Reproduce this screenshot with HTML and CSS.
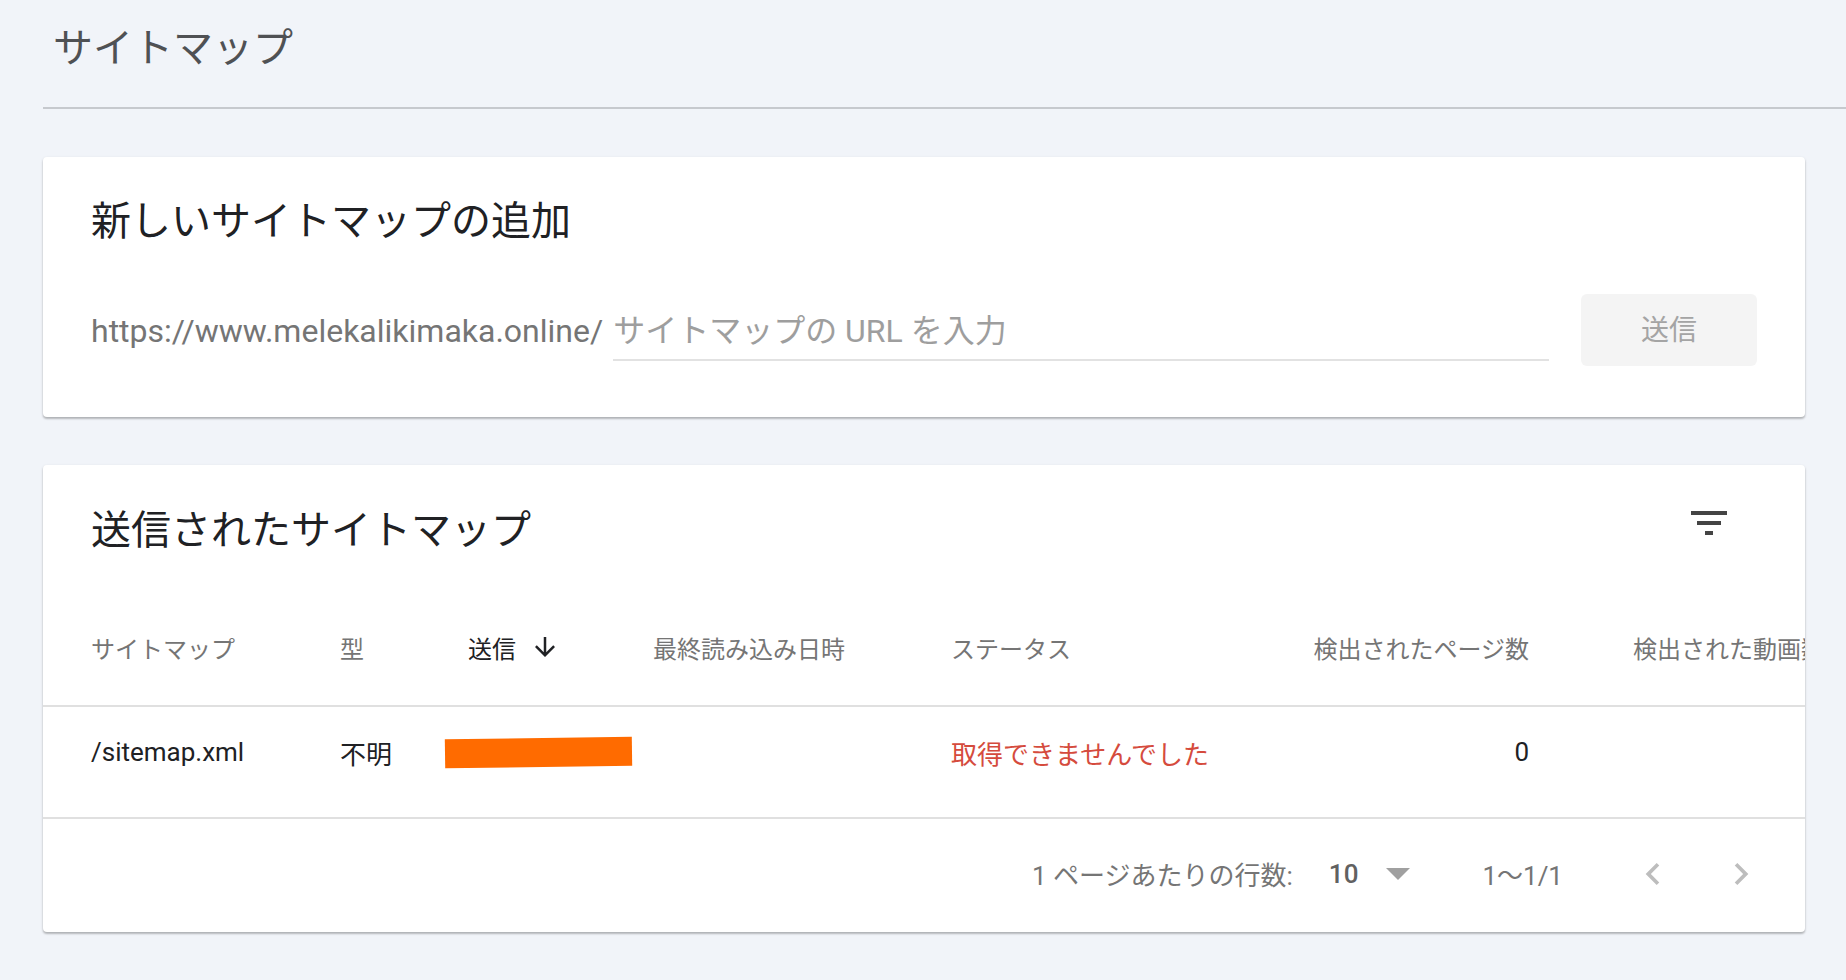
FILE: index.html
```html
<!DOCTYPE html>
<html lang="ja">
<head>
    <meta charset="UTF-8">
    <meta name="viewport" content="width=device-width, initial-scale=1.0">
    <title>サイトマップ</title>
    <link rel="stylesheet" href="styles.css">
</head>
<body>
    <header class="page-header">
        <h1 class="page-title">サイトマップ</h1>
    </header>

    <main class="content">
        <section class="card add-card">
            <h2 class="card-title">新しいサイトマップの追加</h2>
            <form class="add-form" onsubmit="return false">
                <span class="url-prefix">https://www.melekalikimaka.online/</span>
                <input class="url-input" type="text" placeholder="サイトマップの URL を入力">
                <button class="submit-btn" type="submit" disabled>送信</button>
            </form>
        </section>

        <section class="card list-card">
            <div class="card-head">
                <h2 class="card-title">送信されたサイトマップ</h2>
                <button class="icon-btn filter-btn" type="button" title="フィルタ">
                    <svg viewBox="0 0 24 24" width="48" height="48"><path d="M10 18h4v-2h-4v2zM3 6v2h18V6H3zm3 7h12v-2H6v2z"/></svg>
                </button>
            </div>

            <div class="table">
                <div class="tr th">
                    <div>サイトマップ</div>
                    <div>型</div>
                    <div class="sorted">送信
                        <svg viewBox="0 0 24 24" width="30" height="30"><path d="M20 12l-1.41-1.41L13 16.17V4h-2v12.17l-5.58-5.59L4 12l8 8 8-8z"/></svg>
                    </div>
                    <div>最終読み込み日時</div>
                    <div>ステータス</div>
                    <div class="num">検出されたページ数</div>
                    <div class="last">検出された動画数</div>
                </div>
                <div class="tr td">
                    <div>/sitemap.xml</div>
                    <div>不明</div>
                    <div><span class="redact"></span></div>
                    <div></div>
                    <div class="status-error">取得できませんでした</div>
                    <div class="num">0</div>
                    <div class="last"></div>
                </div>
            </div>

            <div class="pager">
                <span>1 ページあたりの行数:</span>
                <span class="rows-select">
                    <span class="rows-value">10</span>
                    <svg viewBox="0 0 24 12" width="24" height="12"><path d="M0 0h24L12 12z"/></svg>
                </span>
                <span class="range">1〜1/1</span>
                <button class="icon-btn page-btn prev" type="button" disabled>
                    <svg viewBox="0 0 24 24" width="44" height="44"><path d="M15.41 7.41L14 6l-6 6 6 6 1.41-1.41L10.83 12z"/></svg>
                </button>
                <button class="icon-btn page-btn next" type="button" disabled>
                    <svg viewBox="0 0 24 24" width="44" height="44"><path d="M10 6L8.59 7.41 13.17 12l-4.58 4.59L10 18l6-6z"/></svg>
                </button>
            </div>
        </section>
    </main>
</body>
</html>
```

FILE: styles.css
```css
body {
    margin: 0;
    background-color: #f1f4f9;
    font-family: Roboto, "Noto Sans CJK JP", sans-serif;
    color: #202124;
}
.page-header {
    box-sizing: border-box;
    height: 109px;
    margin-left: 43px;
    padding: 25px 0 0 10px;
    border-bottom: 2px solid #c6c9ce;
}
.page-title {
    margin: 0;
    font-size: 40px;
    line-height: 48px;
    font-weight: 400;
    color: #4f5154;
}
.content {
    padding: 48px 41px 48px 43px;
}
.card {
    background: white;
    border-radius: 4px;
    box-shadow: 0 1px 3px rgba(0,0,0,0.12), 0 2px 2px rgba(0,0,0,0.2);
    margin-bottom: 48px;
}
.card-title {
    margin: 0;
    font-size: 40px;
    line-height: 48px;
    font-weight: 400;
    color: #202124;
}
.add-card {
    padding: 41px 48px 51px;
}
.add-form {
    display: flex;
    align-items: flex-end;
    height: 72px;
    margin-top: 48px;
}
.url-prefix {
    font-size: 32px;
    line-height: 36px;
    color: #757575;
    margin: 0 10px 17px 0;
    white-space: nowrap;
}
.url-input {
    flex: 1;
    box-sizing: border-box;
    height: 48px;
    margin-bottom: 5px;
    padding: 0 0 10px;
    border: none;
    border-bottom: 2px solid #e2e2e2;
    background: transparent;
    outline: none;
    font-family: Roboto, "Noto Sans CJK JP", sans-serif;
    font-size: 32px;
    color: #202124;
}
.url-input::placeholder {
    color: #9e9e9e;
}
.submit-btn {
    align-self: center;
    width: 176px;
    height: 72px;
    margin-left: 32px;
    padding: 0 0 4px;
    border: none;
    border-radius: 6px;
    background-color: #f4f4f4;
    color: #a4a4a4;
    font-family: Roboto, "Noto Sans CJK JP", sans-serif;
    font-size: 28px;
}
.list-card {
    overflow: hidden;
}
.card-head {
    display: flex;
    justify-content: space-between;
    height: 124px;
    padding: 0 72px 0 48px;
}
.card-head .card-title {
    margin-top: 42px;
}
.filter-btn {
    margin-top: 34px;
}
.icon-btn {
    display: flex;
    align-items: center;
    justify-content: center;
    height: fit-content;
    padding: 0;
    border: none;
    background: none;
}
.filter-btn svg {
    fill: #444;
}
.tr {
    display: grid;
    grid-template-columns: 249px 128px 185px 298px 250px 328px max-content;
    align-items: center;
    box-sizing: border-box;
    padding-left: 48px;
    border-bottom: 2px solid #e0e0e0;
    white-space: nowrap;
}
.th {
    height: 118px;
    font-size: 24px;
    color: #757575;
}
.td {
    height: 112px;
    padding-bottom: 20px;
    font-size: 26px;
    color: #202124;
}
.num {
    text-align: right;
}
.last {
    padding-left: 104px;
}
.sorted {
    display: flex;
    align-items: center;
    color: #202124;
}
.sorted svg {
    margin-left: 14px;
    fill: #202124;
}
.redact {
    display: block;
    width: 187px;
    height: 29px;
    margin-left: -23px;
    background-color: #ff6b00;
    transform: rotate(-0.8deg);
}
.status-error {
    color: #d54b3d;
}
.pager {
    display: flex;
    align-items: center;
    justify-content: flex-end;
    box-sizing: border-box;
    height: 113px;
    padding: 0 42px 4px 0;
    font-size: 26px;
    color: #757575;
}
.rows-select {
    display: flex;
    align-items: center;
    margin-left: 36px;
}
.rows-value {
    font-weight: 500;
    color: #616161;
}
.rows-select svg {
    margin-left: 28px;
    fill: #a0a0a0;
}
.range {
    margin-left: 72px;
}
.page-btn svg {
    fill: #bdbdbd;
}
.prev {
    margin-left: 68px;
}
.next {
    margin-left: 44px;
}
```
